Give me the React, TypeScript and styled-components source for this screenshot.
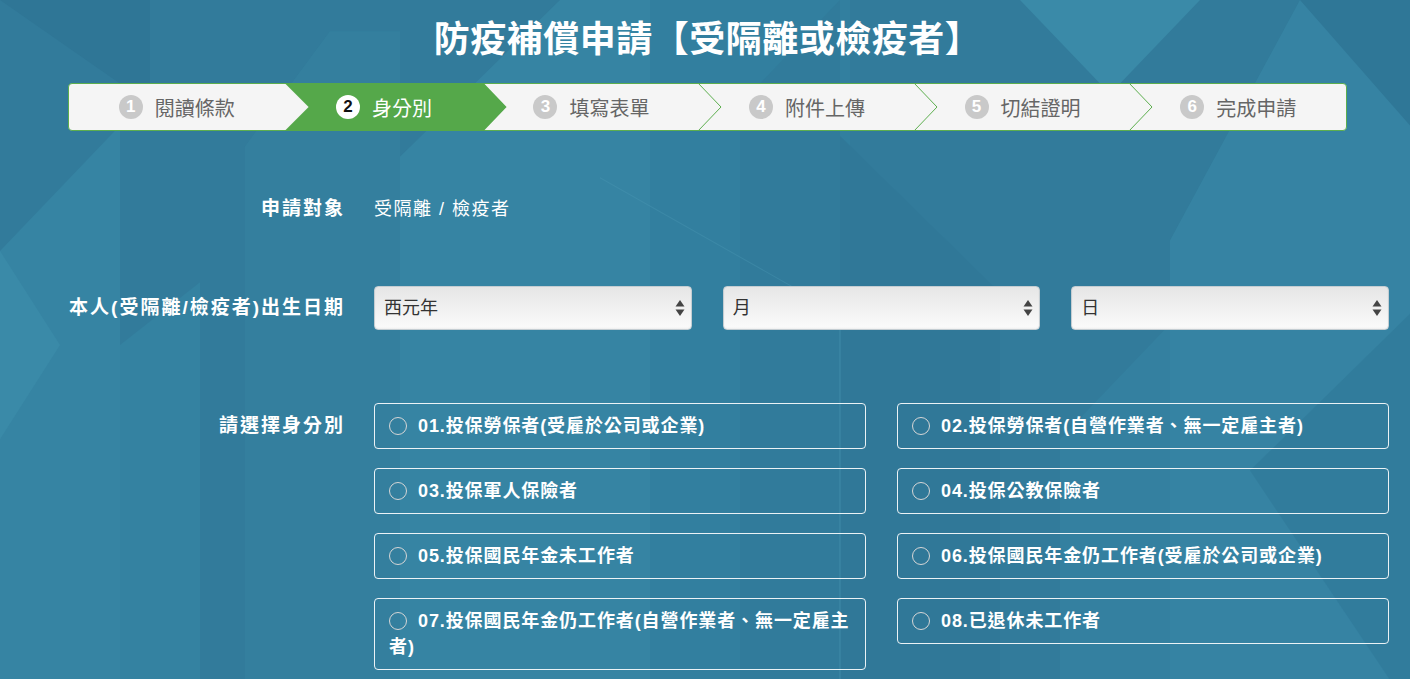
import React, { useState } from "react";
import styled, { createGlobalStyle } from "styled-components";

const FONT = `"Liberation Sans", "Noto Sans CJK TC", sans-serif`;

const steps = ["閱讀條款", "身分別", "填寫表單", "附件上傳", "切結證明", "完成申請"];

const identities = [
  "01.投保勞保者(受雇於公司或企業)",
  "02.投保勞保者(自營作業者、無一定雇主者)",
  "03.投保軍人保險者",
  "04.投保公教保險者",
  "05.投保國民年金未工作者",
  "06.投保國民年金仍工作者(受雇於公司或企業)",
  "07.投保國民年金仍工作者(自營作業者、無一定雇主者)",
  "08.已退休未工作者",
];

const GlobalStyle = createGlobalStyle`
  html, body {
    margin: 0;
    padding: 0;
    background: #327b9b;
    font-family: ${FONT};
  }
  * { box-sizing: border-box; }
`;

// 背景的幾何圖形
const Backdrop = () => (
  <BackdropSvg viewBox="0 0 1410 679" preserveAspectRatio="none">
    <rect width="1410" height="679" fill="#327b9b" />
    <polygon points="0,0 150,0 150,100" fill="#2f7696" />
    <polygon points="0,240 120,120 120,679 0,679" fill="#3684a3" />
    <polygon points="0,240 60,330 0,420" fill="#3a8aa8" />
    <polygon points="120,330 200,270 200,679 120,679" fill="#3482a1" />
    <polygon points="245,140 330,30 400,30 400,679 245,679" fill="#3481a0" opacity="0.7" />
    <polygon points="400,150 560,0 650,0 650,679 400,679" fill="#3887a6" opacity="0.75" />
    <polygon points="650,0 850,0 850,679 650,679" fill="#3282a2" opacity="0.6" />
    <polygon points="740,100 840,0 840,679 740,679" fill="#2f7898" opacity="0.5" />
    <polygon points="840,130 1000,280 1000,679 840,679" fill="#307898" />
    <polygon points="1020,0 1200,0 1110,90" fill="#3a8aa8" />
    <polygon points="1170,230 1300,0 1410,0 1410,679 1170,679" fill="#3786a5" opacity="0.8" />
    <polygon points="1300,0 1410,0 1410,120" fill="#2f7797" />
    <polygon points="1060,420 1180,300 1180,679 1060,679" fill="#3583a2" opacity="0.7" />
    <polygon points="1250,450 1410,300 1410,679" fill="#2f7898" opacity="0.6" />
    <line x1="840" y1="300" x2="840" y2="679" stroke="#4a97b3" strokeWidth="1" opacity="0.6" />
    <line x1="600" y1="170" x2="840" y2="300" stroke="#4a97b3" strokeWidth="1" opacity="0.4" />
  </BackdropSvg>
);

const Chevron = () => (
  <ChevronSvg width="24" height="48" viewBox="0 0 24 48">
    <polyline points="0,0 23,24 0,48" fill="none" stroke="#5cae4e" strokeWidth="1" />
  </ChevronSvg>
);

const SelectArrows = () => (
  <ArrowSvg width="10" height="18" viewBox="0 0 10 18">
    <polygon points="5,1 9.5,7.5 0.5,7.5" fill="#444" />
    <polygon points="5,17 9.5,10.5 0.5,10.5" fill="#444" />
  </ArrowSvg>
);

export default function App() {
  const [picked, setPicked] = useState<number | null>(null);

  return (
    <Page>
      <GlobalStyle />
      <Backdrop />
      <Content>
        <Title>防疫補償申請【受隔離或檢疫者】</Title>

        <StepBar>
          {steps.map((s, i) => {
            const active = i === 1;
            return (
              <Step key={s} $active={active}>
                <StepNum $active={active}>{i + 1}</StepNum>
                <StepText $active={active}>{s}</StepText>
                {i >= 2 && i < steps.length - 1 && <Chevron />}
              </Step>
            );
          })}
        </StepBar>

        <FieldRow $mt={65} $align="center">
          <Label>申請對象</Label>
          <Value>受隔離 / 檢疫者</Value>
        </FieldRow>

        <FieldRow $mt={64} $align="center">
          <Label>本人(受隔離/檢疫者)出生日期</Label>
          <SelectGrid>
            {["西元年", "月", "日"].map((p) => (
              <SelectWrap key={p}>
                <Select defaultValue="">
                  <option value="">{p}</option>
                </Select>
                <SelectArrows />
              </SelectWrap>
            ))}
          </SelectGrid>
        </FieldRow>

        <FieldRow $mt={73} $align="start">
          <Label $pt={10}>請選擇身分別</Label>
          <OptionGrid>
            {identities.map((t, i) => (
              <OptionBox key={t} onClick={() => setPicked(i)}>
                <Radio $checked={picked === i} />
                {t}
              </OptionBox>
            ))}
          </OptionGrid>
        </FieldRow>
      </Content>
    </Page>
  );
}

const Page = styled.div`
  position: relative;
  min-height: 679px;
  overflow: hidden;
`;

const BackdropSvg = styled.svg`
  position: absolute;
  inset: 0;
  width: 100%;
  height: 100%;
  z-index: 0;
`;

const Content = styled.div`
  position: relative;
  z-index: 1;
  padding: 16px 21px 40px 68px;
`;

const Title = styled.h1`
  margin: 0 0 19px;
  text-align: center;
  width: 1279px;
  font-size: 36px;
  line-height: 48px;
  font-weight: bold;
  letter-spacing: 0.5px;
  color: #fff;
`;

const StepBar = styled.div`
  display: flex;
  width: 1279px;
  height: 48px;
  background: #f5f5f5;
  border: 1px solid #5cae4e;
  border-radius: 4px;
`;

const Step = styled.div<{ $active: boolean }>`
  position: relative;
  flex: ${(p) => (p.$active ? "0 0 222px" : "1 1 0")};
  display: flex;
  align-items: center;
  justify-content: center;
  gap: 12px;
  ${(p) =>
    p.$active &&
    `
    margin: -1px -23px -1px 0;
    padding-right: 23px;
    background: #55a84a;
    z-index: 2;
    clip-path: polygon(0 0, calc(100% - 23px) 0, 100% 50%, calc(100% - 23px) 100%, 0 100%, 24px 50%);
  `}
`;

const StepNum = styled.span<{ $active: boolean }>`
  width: 24px;
  height: 24px;
  border-radius: 50%;
  display: flex;
  align-items: center;
  justify-content: center;
  font-size: 17px;
  font-weight: bold;
  background: ${(p) => (p.$active ? "#fff" : "#c9c9c9")};
  color: ${(p) => (p.$active ? "#111" : "#fff")};
`;

const StepText = styled.span<{ $active: boolean }>`
  font-size: 20px;
  color: ${(p) => (p.$active ? "#fff" : "#666")};
`;

const ChevronSvg = styled.svg`
  position: absolute;
  right: -23px;
  top: -1px;
  z-index: 1;
`;

const FieldRow = styled.div<{ $mt: number; $align: string }>`
  display: grid;
  grid-template-columns: 275px 1fr;
  column-gap: 31px;
  align-items: ${(p) => p.$align};
  margin-top: ${(p) => p.$mt}px;
`;

const Label = styled.div<{ $pt?: number }>`
  text-align: right;
  font-size: 19px;
  line-height: 26px;
  font-weight: bold;
  letter-spacing: 2px;
  margin-right: -2px;
  color: #fff;
  white-space: nowrap;
  padding-top: ${(p) => p.$pt || 0}px;
`;

const Value = styled.div`
  font-size: 18px;
  line-height: 26px;
  letter-spacing: 1.5px;
  color: #fff;
`;

const SelectGrid = styled.div`
  display: grid;
  grid-template-columns: repeat(3, 1fr);
  column-gap: 31px;
`;

const SelectWrap = styled.div`
  position: relative;
`;

const Select = styled.select`
  appearance: none;
  width: 100%;
  height: 44px;
  padding: 0 30px 0 9px;
  border: 1px solid #c4cdd2;
  border-radius: 4px;
  background: linear-gradient(#e6e6e6, #fbfbfb);
  box-shadow: inset 0 -1px 2px rgba(0, 0, 0, 0.05);
  font-family: ${FONT};
  font-size: 18px;
  color: #333;
  outline: none;
`;

const ArrowSvg = styled.svg`
  position: absolute;
  right: 7px;
  top: 13px;
  pointer-events: none;
`;

const OptionGrid = styled.div`
  display: grid;
  grid-template-columns: 1fr 1fr;
  column-gap: 31px;
  row-gap: 19px;
  align-items: start;
`;

const OptionBox = styled.div`
  border: 1px solid rgba(255, 255, 255, 0.9);
  border-radius: 4px;
  padding: 9px 10px 9px 14px;
  font-size: 18px;
  line-height: 26px;
  font-weight: bold;
  letter-spacing: 0.9px;
  color: #fff;
  cursor: pointer;
`;

const Radio = styled.span<{ $checked: boolean }>`
  display: inline-block;
  width: 18px;
  height: 18px;
  margin: 0 11px 0 0;
  vertical-align: -3px;
  border: 1.5px solid #d6d6d6;
  border-radius: 50%;
  background: ${(p) => (p.$checked ? "radial-gradient(#fff 35%, transparent 40%)" : "transparent")};
`;
